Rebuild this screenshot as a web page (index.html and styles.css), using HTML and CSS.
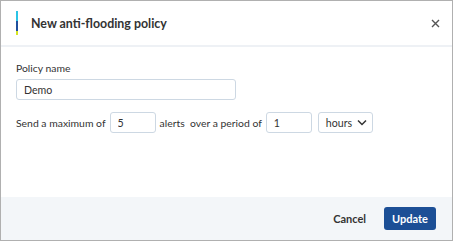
FILE: index.html
```html
<!DOCTYPE html>
<html lang="en">
<head>
<meta charset="UTF-8" />
<meta name="viewport" content="width=device-width, initial-scale=1" />
<title>New anti-flooding policy</title>
<link rel="stylesheet" href="styles.css">
</head>
<body>

<div class="dialog">
  <div class="dialog-header">
    <span class="accent"></span>
    <h1>New anti-flooding policy</h1>
    <button class="close-btn" aria-label="Close">
      <svg width="9" height="9" viewBox="0 0 9 9"><path d="M1 1L8 8M8 1L1 8" stroke="#555" stroke-width="1.4" fill="none"/></svg>
    </button>
  </div>

  <div class="dialog-body">
    <label class="field-label" for="policyName">Policy name</label>
    <input class="text-input name-input" id="policyName" type="text" value="Demo" />

    <div class="limit-row">
      <span>Send a maximum of</span>
      <input class="text-input small-input" type="text" value="5" />
      <span>alerts&nbsp; over a period of</span>
      <input class="text-input small-input" type="text" value="1" />
      <div class="select-box">
        <span>hours</span>
        <svg width="10" height="7" viewBox="0 0 10 7"><path d="M1 1.5L5 5.5L9 1.5" stroke="#333" stroke-width="1.5" fill="none"/></svg>
      </div>
    </div>
  </div>

  <div class="dialog-footer">
    <button class="btn-cancel">Cancel</button>
    <button class="btn-update">Update</button>
  </div>
</div>

</body>
</html>
```

FILE: styles.css
```css
body {
  margin: 0;
  padding: 0;
  font-family: Lato, "Noto Sans", sans-serif;
  color: #333;
  background: #fff;
}
.dialog {
  width: 453px;
  height: 241px;
  box-sizing: border-box;
  border: 1px solid #b0b0b0;
  display: flex;
  flex-direction: column;
  background: #fff;
}
.dialog-header {
  height: 46px;
  box-sizing: border-box;
  border-bottom: 2px solid #eef1f5;
  display: flex;
  align-items: center;
  padding: 0 12px 0 15px;
}
.accent {
  width: 2px;
  height: 24px;
  background: linear-gradient(#2bc4e6 0, #2bc4e6 42%, #1f4f9c 42%, #1f4f9c 84%, #d6e524 84%);
  margin-right: 13px;
}
.dialog-header h1 {
  flex: 1;
  margin: 0;
  font-size: 12.4px;
  font-weight: bold;
  color: #333;
}
.close-btn {
  border: none;
  background: none;
  padding: 0;
  width: 9px;
  height: 9px;
  display: flex;
  cursor: pointer;
}
.dialog-body {
  flex: 1;
  padding: 14px 15px 0;
  font-size: 10.4px;
}
.field-label {
  display: block;
  line-height: 14px;
  margin-bottom: 4px;
}
.text-input {
  box-sizing: border-box;
  height: 21px;
  border: 1px solid #cdd8e3;
  border-radius: 3px;
  padding: 0 7px;
  font-family: inherit;
  font-size: 10.6px;
  color: #333;
  outline: none;
}
.name-input {
  display: block;
  width: 220px;
}
.limit-row {
  margin-top: 12px;
  display: flex;
  align-items: center;
  gap: 4px;
}
.small-input {
  width: 46px;
}
.select-box {
  box-sizing: border-box;
  height: 21px;
  border: 1px solid #cdd8e3;
  border-radius: 3px;
  padding: 0 5px 0 7px;
  display: flex;
  align-items: center;
  gap: 5px;
  margin-left: 2px;
  font-size: 10.6px;
}
.dialog-footer {
  height: 43px;
  background: #f3f6f9;
  display: flex;
  justify-content: flex-end;
  align-items: center;
  padding: 0 16px;
  gap: 18px;
}
.btn-cancel {
  border: none;
  background: none;
  font-family: inherit;
  font-size: 11px;
  font-weight: bold;
  color: #333;
  padding: 0;
  cursor: pointer;
}
.btn-update {
  border: none;
  background: #1c4f96;
  color: #fff;
  font-family: inherit;
  font-size: 11px;
  font-weight: bold;
  height: 23px;
  width: 52px;
  border-radius: 3px;
  cursor: pointer;
}
```
